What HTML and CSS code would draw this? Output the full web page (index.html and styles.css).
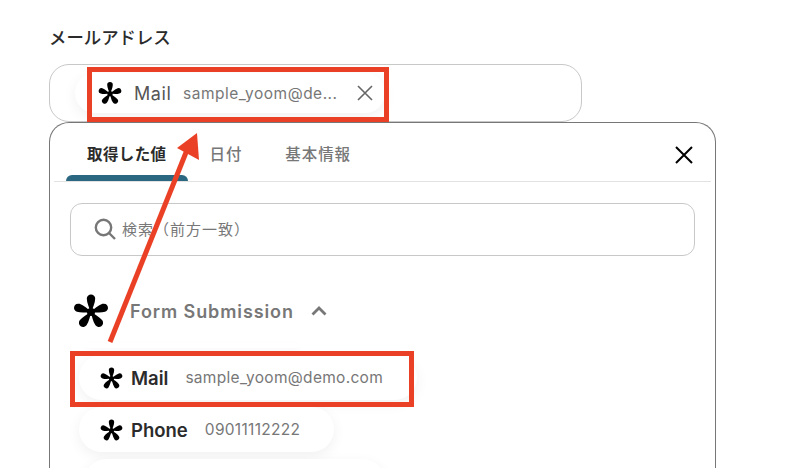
FILE: index.html
```html
<!DOCTYPE html>
<html lang="ja">

<head>
  <meta charset="UTF-8">
  <title>メールアドレス</title>
  <link rel="stylesheet" href="styles.css">
</head>

<body>
  <svg class="defs" width="0" height="0">
    <symbol id="star" viewBox="0 0 36 36">
      <g fill="#000">
        <circle cx="18" cy="19" r="4"/>
        <path id="petal" d="M18 20C16.4 15 13.8 10 13.8 5.6A4.2 4.2 0 0 1 22.2 5.6C22.2 10 19.6 15 18 20z"/>
        <use href="#petal" transform="rotate(72 18 19)"/>
        <use href="#petal" transform="rotate(144 18 19)"/>
        <use href="#petal" transform="rotate(216 18 19)"/>
        <use href="#petal" transform="rotate(288 18 19)"/>
      </g>
    </symbol>
  </svg>

  <main class="page">
    <h2 class="field-label">メールアドレス</h2>

    <!-- selected value -->
    <div class="field">
      <div class="pill selected">
        <svg class="star-md"><use href="#star"/></svg>
        <span class="selected-name">Mail</span>
        <span class="selected-value">sample_yoom@de...</span>
        <svg class="remove" viewBox="0 0 16 16"><path d="M1 1l14 14M15 1L1 15"/></svg>
      </div>
    </div>

    <!-- value picker -->
    <div class="popup">
      <div class="tabs">
        <div class="tab active">取得した値</div>
        <div class="tab">日付</div>
        <div class="tab">基本情報</div>
        <svg class="close" viewBox="0 0 18 18"><path d="M1 1l16 16M17 1L1 17"/></svg>
      </div>

      <div class="search">
        <svg class="search-icon" viewBox="0 0 22 22"><circle cx="9.5" cy="9.5" r="7.7"/><path d="M15 15l6 6"/></svg>
        <span>検索（前方一致）</span>
      </div>

      <div class="group-head">
        <svg class="star-lg"><use href="#star"/></svg>
        <span class="group-name">Form Submission</span>
        <svg class="chevron" viewBox="0 0 16 10"><path d="M1.5 8.5L8 2l6.5 6.5"/></svg>
      </div>

      <div class="pill-list">
        <div class="pill stub"></div>
        <div class="pill item">
          <svg class="star-sm"><use href="#star"/></svg>
          <span class="item-name">Mail</span>
          <span class="item-value">sample_yoom@demo.com</span>
        </div>
        <div class="pill item">
          <svg class="star-sm"><use href="#star"/></svg>
          <span class="item-name">Phone</span>
          <span class="item-value">09011112222</span>
        </div>
        <div class="pill item last"></div>
      </div>
    </div>
  </main>

  <!-- annotations drawn on top of the screenshot -->
  <div class="mark mark-top"></div>
  <div class="mark mark-bottom"></div>
  <svg class="arrow" width="796" height="468" viewBox="0 0 796 468">
    <path class="arrow-line" d="M110 342L187 150"/>
    <path class="arrow-head" d="M197 133L177 148L199 160z"/>
  </svg>
</body>

</html>
```

FILE: styles.css
```css
html,
body {
  margin: 0;
  height: 468px;
  overflow: hidden;
  background-color: white;
}

body {
  position: relative;
  font-family: Inter, "Noto Sans CJK JP", sans-serif;
  color: #333;
}

.defs {
  position: absolute;
}

.page {
  padding: 27px 80px 0 49px;
}

.field-label {
  margin: 0 0 15px;
  font-size: 17.4px;
  line-height: 22px;
  font-weight: 500;
  color: #2b2b2b;
}

.field {
  box-sizing: border-box;
  width: 533px;
  height: 58px;
  padding: 8px 25px;
  border: 1px solid #c8c8c8;
  border-radius: 20px;
}

.pill {
  display: flex;
  align-items: center;
  background-color: white;
  border-radius: 23px;
  box-shadow: 0 4px 14px rgba(0, 0, 0, 0.06);
}

.selected {
  width: 310px;
  height: 40px;
  box-sizing: border-box;
  padding: 0 12px 0 23px;
}

.star-md {
  width: 24px;
  height: 24px;
  flex: none;
  margin-right: 12px;
}

.selected-name {
  width: 49px;
  flex: none;
  font-size: 18px;
  letter-spacing: 0.6px;
  color: #555;
}

.selected-value {
  font-size: 15.5px;
  color: #777;
  letter-spacing: 0.5px;
  white-space: nowrap;
}

.remove {
  width: 16px;
  height: 16px;
  margin-left: auto;
  flex: none;
  fill: none;
  stroke: #666;
  stroke-width: 1.6;
}

.popup {
  box-sizing: border-box;
  width: 667px;
  height: 346px;
  padding: 0 4px;
  overflow: hidden;
  border: 1px solid #777;
  border-bottom: none;
  border-radius: 20px 20px 0 0;
}

.tabs {
  display: flex;
  gap: 1px;
  height: 58px;
  padding-left: 12px;
  border-bottom: 1px solid #e2e2e2;
}

.tab {
  position: relative;
  padding: 0 21px;
  font-size: 15.5px;
  line-height: 63px;
  font-weight: 500;
  letter-spacing: 0.9px;
  color: #777;
}

.tab.active {
  color: #2b2b2b;
  font-weight: 700;
  letter-spacing: 0.4px;
}

.tab.active::after {
  content: "";
  position: absolute;
  left: 0;
  right: 0;
  bottom: 0;
  height: 6px;
  background-color: #2b6780;
  border-radius: 6px 6px 0 0;
}

.close {
  width: 18px;
  height: 18px;
  margin: 23px 18px 0 auto;
  fill: none;
  stroke: #000;
  stroke-width: 2;
}

.search {
  display: flex;
  align-items: center;
  box-sizing: border-box;
  height: 53px;
  margin: 21px 16px 0;
  padding-left: 23px;
  padding-bottom: 2px;
  border: 1px solid #c8c8c8;
  border-radius: 12px;
  font-size: 15px;
  color: #777;
}

.search-icon {
  width: 22px;
  height: 22px;
  margin-right: 6px;
  fill: none;
  stroke: #777;
  stroke-width: 2.4;
}

.search span {
  letter-spacing: 1px;
}

.group-head {
  display: flex;
  align-items: center;
  height: 40px;
  margin-top: 35px;
  padding-left: 19px;
}

.star-lg {
  width: 36px;
  height: 38px;
  flex: none;
  margin-right: 21px;
}

.group-name {
  font-size: 18px;
  font-weight: 600;
  letter-spacing: 0.9px;
  color: #777;
}

.chevron {
  width: 16px;
  height: 10px;
  margin-left: 17px;
  fill: none;
  stroke: #777;
  stroke-width: 2.8;
}

.pill-list {
  display: flex;
  flex-direction: column;
  align-items: flex-start;
  gap: 7px;
  margin-top: 12px;
  padding-left: 25px;
}

.stub {
  width: 215px;
  height: 5px;
  margin-left: 6px;
  border-radius: 0 0 16px 16px;
  box-shadow: 0 3px 8px rgba(0, 0, 0, 0.04);
}

.item {
  flex: none;
  box-sizing: border-box;
  height: 45px;
  padding: 0 34px 0 21px;
}

.star-sm {
  width: 23px;
  height: 24px;
  flex: none;
  margin-right: 8px;
}

.item-name {
  font-size: 18.5px;
  font-weight: 600;
  color: #2b2b2b;
  margin-right: 17px;
}

.item-value {
  font-size: 15.5px;
  letter-spacing: 0.3px;
  color: #777;
}

.item.last {
  width: 301px;
  margin-left: 5px;
}

.mark {
  position: absolute;
  box-sizing: border-box;
  border: 5px solid #ea4126;
}

.mark-top {
  left: 87px;
  top: 67px;
  width: 302px;
  height: 55px;
}

.mark-bottom {
  left: 70px;
  top: 351px;
  width: 344px;
  height: 56px;
}

.arrow {
  position: absolute;
  left: 0;
  top: 0;
}

.arrow-line {
  stroke: #ea4126;
  stroke-width: 5;
  fill: none;
}

.arrow-head {
  fill: #ea4126;
}
```
